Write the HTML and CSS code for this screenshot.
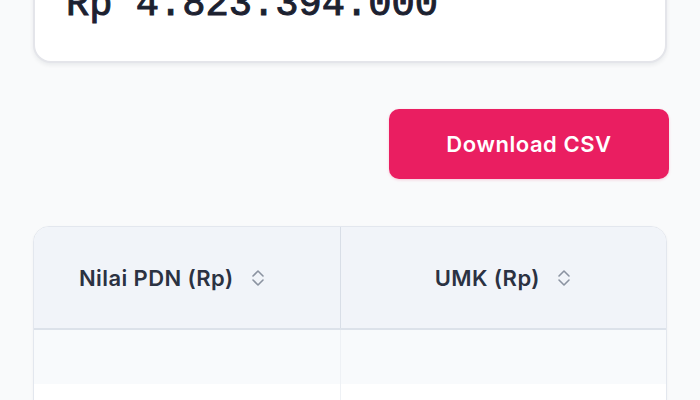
FILE: index.html
```html
<!DOCTYPE html>
<html lang="id">
<head>
<meta charset="utf-8">
<title>Ringkasan PDN</title>
<link rel="stylesheet" href="styles.css">
</head>
<body>
<main class="page">
  <section class="total-card">
    <div class="total-value">Rp 4.823.394.000</div>
  </section>

  <div class="actions">
    <button class="btn-download" type="button">Download CSV</button>
  </div>

  <div class="table-wrap">
    <table class="data-table">
      <thead>
        <tr>
          <th class="col-pdn">
            <span class="th-inner">Nilai PDN (Rp)
              <svg class="sort-icon" viewBox="0 0 16 24" width="16" height="24" aria-hidden="true">
                <path d="M3 10 L8 5 L13 10" />
                <path d="M3 14 L8 19 L13 14" />
              </svg>
            </span>
          </th>
          <th class="col-umk">
            <span class="th-inner">UMK (Rp)
              <svg class="sort-icon" viewBox="0 0 16 24" width="16" height="24" aria-hidden="true">
                <path d="M3 10 L8 5 L13 10" />
                <path d="M3 14 L8 19 L13 14" />
              </svg>
            </span>
          </th>
        </tr>
      </thead>
      <tbody>
        <tr class="row-alt"><td></td><td></td></tr>
        <tr><td></td><td></td></tr>
      </tbody>
    </table>
  </div>
</main>
</body>
</html>
```

FILE: styles.css
```css
* { box-sizing: border-box; }

html, body {
  margin: 0;
  padding: 0;
  background: #f9fafb;
  font-family: Inter, "Noto Sans", sans-serif;
  overflow: hidden;
}

.page {
  padding: 0 33px 0 33px;
}

.total-card {
  margin-top: -20px;
  background: #ffffff;
  border: 2px solid #e4e5ea;
  border-radius: 18px;
  padding: 0 30px 33px 31px;
  box-shadow: 0 2px 4px rgba(17, 24, 39, 0.07);
}

.total-value {
  font-family: "Liberation Mono", "DejaVu Sans Mono", monospace;
  font-size: 38.75px;
  line-height: 46px;
  color: #1c2130;
  letter-spacing: 0;
  -webkit-text-stroke: 1px #1c2130;
}

.actions {
  display: flex;
  justify-content: flex-end;
  margin: 46px -2px 0 0;
}

.btn-download {
  width: 280px;
  height: 70px;
  border: none;
  border-radius: 10px;
  background: #ea1e61;
  color: #ffffff;
  font-family: Inter, "Noto Sans", sans-serif;
  font-size: 22px;
  font-weight: 600;
  letter-spacing: 0.55px;
  cursor: pointer;
  box-shadow: 0 1px 3px rgba(234, 30, 97, 0.2);
}

.table-wrap {
  margin-top: 47px;
  border: 1px solid #e3e7ee;
  border-radius: 16px;
  overflow: hidden;
  background: #ffffff;
  box-shadow: 0 1px 3px rgba(17, 24, 39, 0.04);
}

.data-table {
  width: 100%;
  border-collapse: collapse;
  table-layout: fixed;
}

.data-table th {
  height: 102px;
  background: #f1f4f9;
  font-size: 22px;
  font-weight: 600;
  letter-spacing: 0.4px;
  color: #2b3242;
  border-bottom: 2px solid #dce2ea;
  padding: 0;
}

.col-pdn {
  width: 306px;
  text-align: left;
  padding-left: 45px !important;
  border-right: 1px solid #d8dee7;
}

.col-umk {
  text-align: center;
}

.th-inner {
  display: inline-flex;
  align-items: center;
  gap: 16px;
}

.sort-icon {
  fill: none;
  stroke: #8b93a1;
  stroke-width: 1.6;
  stroke-linecap: round;
  stroke-linejoin: round;
}

.data-table td {
  height: 55px;
  padding: 0;
}

.data-table td:first-child {
  border-right: 1px solid #eef1f5;
}

.row-alt td {
  background: #f8fafc;
}
```
